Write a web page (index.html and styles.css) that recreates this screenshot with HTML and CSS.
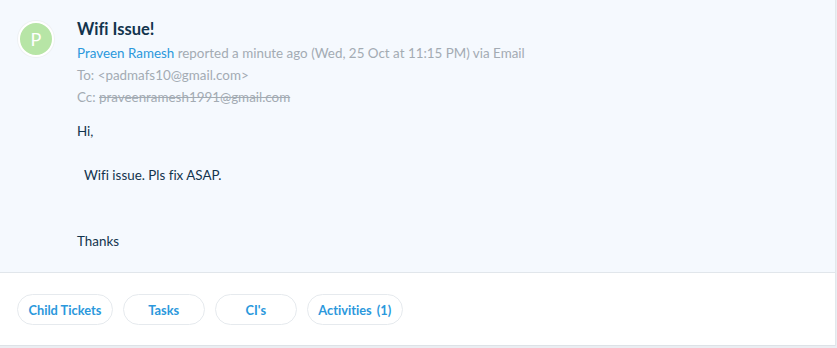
FILE: index.html
```html
<!DOCTYPE html>
<html lang="en">
<head>
  <meta charset="UTF-8" />
  <title>Wifi Issue!</title>
  <link rel="stylesheet" href="styles.css">
</head>
<body>
  <div class="ticket">
    <div class="ticket-head">
      <div class="avatar">P</div>
      <div class="ticket-main">
        <h2 class="subject">Wifi Issue!</h2>
        <div class="meta"><a class="requester" href="#">Praveen Ramesh</a> reported a minute ago (Wed, 25 Oct at 11:15 PM) via Email</div>
        <div class="meta">To: &lt;padmafs10@gmail.com&gt;</div>
        <div class="meta">Cc: <s>praveenramesh1991@gmail.com</s></div>
        <div class="body">
          <p>Hi,</p>
          <p>&nbsp;</p>
          <p class="indent">Wifi issue. Pls fix ASAP.</p>
          <p>&nbsp;</p>
          <p>&nbsp;</p>
          <p>Thanks</p>
        </div>
      </div>
    </div>
    <div class="ticket-tabs">
      <button class="pill">Child Tickets</button>
      <button class="pill">Tasks</button>
      <button class="pill">CI's</button>
      <button class="pill">Activities <span class="count">(1)</span></button>
    </div>
  </div>
</body>
</html>
```

FILE: styles.css
```css
body {
  margin: 0;
  background: #ebeef2;
  font-family: Lato, "Liberation Sans", sans-serif;
  font-size: 13.4px;
  font-variant-ligatures: none;
  color: #12344d;
}
.ticket {
  width: 836px;
  background: #fff;
  border-right: 1px solid #e3e7eb;
  border-bottom: 1px solid #dde2e7;
  box-sizing: border-box;
}
.ticket-head {
  display: flex;
  background: #f5f9fe;
  border-bottom: 1px solid #e1e6eb;
  padding: 18px 0 21px 18px;
  height: 273px;
  box-sizing: border-box;
}
.avatar {
  width: 32px;
  height: 32px;
  border-radius: 50%;
  border: 2px solid #fff;
  box-shadow: 0 0 0 1px #eef1f4;
  background: #b7e5a6;
  color: #fff;
  font-size: 18px;
  line-height: 32px;
  text-align: center;
  margin-top: 3px;
  flex-shrink: 0;
}
.ticket-main {
  margin-left: 23px;
}
.subject {
  margin: 0 0 2px;
  font-size: 16.5px;
  font-weight: 700;
  line-height: 22px;
  color: #12344d;
}
.meta {
  color: #a3abb3;
  line-height: 22px;
}
.requester {
  color: #2b98dc;
  text-decoration: none;
}
.meta s {
  color: #a3abb3;
}
.body {
  margin-top: 12px;
  line-height: 22px;
}
.body p {
  margin: 0;
}
.indent {
  padding-left: 7px;
}
.ticket-tabs {
  display: flex;
  gap: 10px;
  padding: 21px 17px 20px;
}
.pill {
  min-width: 82px;
  height: 31px;
  padding: 0 10.5px;
  border: 1px solid #e6eaee;
  border-radius: 16px;
  background: #fff;
  color: #2b98dc;
  font-family: inherit;
  font-size: 12.8px;
  font-weight: 700;
  font-variant-ligatures: none;
  cursor: pointer;
}
.count {
  margin-left: 2px;
}
```
